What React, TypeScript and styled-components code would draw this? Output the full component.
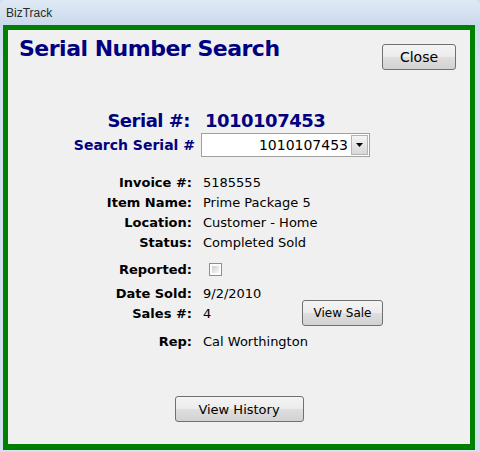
import styled, { createGlobalStyle } from "styled-components";

const GlobalStyle = createGlobalStyle`
  html, body {
    margin: 0;
    padding: 0;
    background: #d3e0ef;
  }
  body {
    font-family: "DejaVu Sans", Verdana, sans-serif;
  }
`;

const Window = styled.div`
  width: 480px;
  height: 452px;
  box-sizing: border-box;
  display: flex;
  flex-direction: column;
  padding: 0 5px 2px 3px;
  border-radius: 6px 6px 0 0;
  background: linear-gradient(to bottom, #e0eaf6 0px, #cad9ec 25px, #d3e0ef 60px, #d3e0ef 100%);
`;

const TitleBar = styled.div`
  height: 25px;
  display: flex;
  align-items: center;
  padding-left: 3px;
  font-family: "Liberation Sans", Arial, sans-serif;
  font-size: 12px;
  color: #2a2a2a;
`;

const Panel = styled.div`
  flex: 1;
  display: flex;
  flex-direction: column;
  background: #f0f0f0;
  border: 5px solid #008000;
  border-bottom-width: 6px;
`;

const Header = styled.div`
  display: flex;
  justify-content: space-between;
  align-items: flex-start;
  padding: 6px 14px 0 11px;
`;

const Heading = styled.h1`
  margin: 0;
  font-family: "DejaVu Sans", Verdana, sans-serif;
  font-size: 22px;
  line-height: 26px;
  font-weight: bold;
  letter-spacing: -0.5px;
  color: #000080;
`;

const PushButton = styled.button<{ $w: number; $size: number; $mt?: number }>`
  width: ${(p) => p.$w}px;
  height: 26px;
  margin-top: ${(p) => p.$mt ?? 0}px;
  padding: 0;
  box-sizing: border-box;
  border: 1px solid #707070;
  border-radius: 3px;
  background: linear-gradient(to bottom, #f4f4f4 0%, #ececec 48%, #dedede 52%, #d2d2d2 100%);
  font-family: "DejaVu Sans", Verdana, sans-serif;
  font-size: ${(p) => p.$size}px;
  color: #000;
`;

const SerialBlock = styled.div`
  display: flex;
  flex-direction: column;
  gap: 1px;
  margin-top: 38px;
`;

const Row = styled.div<{ $gap: number; $h: number; $mt?: number }>`
  display: flex;
  align-items: center;
  gap: ${(p) => p.$gap}px;
  height: ${(p) => p.$h}px;
  margin-top: ${(p) => p.$mt ?? 0}px;
`;

const SerialLabel = styled.div<{ $w: number; $size: number; $ls?: number }>`
  width: ${(p) => p.$w}px;
  text-align: right;
  white-space: nowrap;
  font-size: ${(p) => p.$size}px;
  letter-spacing: ${(p) => p.$ls ?? 0}px;
  font-weight: bold;
  color: #000080;
`;

const SerialValue = styled.div`
  font-size: 18px;
  letter-spacing: -0.5px;
  font-weight: bold;
  color: #000080;
`;

const Combo = styled.div`
  width: 169px;
  height: 24px;
  box-sizing: border-box;
  display: flex;
  align-items: stretch;
  justify-content: flex-end;
  padding: 1px;
  border: 1px solid #a0a0a0;
  background: #fff;
`;

const ComboText = styled.span`
  display: flex;
  align-items: center;
  padding-right: 3px;
  font-size: 14px;
  color: #000;
`;

const DropButton = styled.span`
  width: 17px;
  box-sizing: border-box;
  display: flex;
  align-items: center;
  justify-content: center;
  border: 1px solid #b4b4b4;
  background: linear-gradient(to bottom, #f5f5f5, #e6e6e6 50%, #d8d8d8);
`;

const Details = styled.div`
  display: flex;
  flex-direction: column;
  margin-top: 15px;
`;

const Label = styled.div`
  width: 184px;
  text-align: right;
  font-size: 13px;
  font-weight: bold;
  color: #000;
`;

const Value = styled.div<{ $w?: number }>`
  ${(p) => (p.$w ? `width: ${p.$w}px;` : "")}
  font-size: 13px;
  color: #000;
  white-space: nowrap;
`;

const Check = styled.span`
  width: 13px;
  height: 13px;
  margin-left: 6px;
  box-sizing: border-box;
  padding: 2px;
  border: 1px solid #8f8f8f;
  background: linear-gradient(135deg, #cdd0d5, #f7f7f7) content-box, #fdfdfd;
`;

const Footer = styled.div`
  display: flex;
  justify-content: center;
  margin-top: 45px;
`;

const details: { label: string; value: string }[] = [
  { label: "Invoice #:", value: "5185555" },
  { label: "Item Name:", value: "Prime Package 5" },
  { label: "Location:", value: "Customer - Home" },
  { label: "Status:", value: "Completed Sold" },
];

export default function App() {
  return (
    <>
      <GlobalStyle />
      <Window>
        <TitleBar>BizTrack</TitleBar>
        <Panel>
          <Header>
            <Heading>Serial Number Search</Heading>
            <PushButton $w={74} $size={14} $mt={8}>Close</PushButton>
          </Header>

          <SerialBlock>
            <Row $gap={15} $h={24}>
              <SerialLabel $w={182} $size={18} $ls={-0.5}>Serial #:</SerialLabel>
              <SerialValue>1010107453</SerialValue>
            </Row>
            <Row $gap={6} $h={24}>
              <SerialLabel $w={187} $size={14}>Search Serial #</SerialLabel>
              <Combo>
                <ComboText>1010107453</ComboText>
                <DropButton>
                  <svg width="7" height="4" viewBox="0 0 7 4">
                    <polygon points="0,0 7,0 3.5,4" fill="#000" />
                  </svg>
                </DropButton>
              </Combo>
            </Row>
          </SerialBlock>

          <Details>
            {details.map((d) => (
              <Row key={d.label} $gap={11} $h={20}>
                <Label>{d.label}</Label>
                <Value>{d.value}</Value>
              </Row>
            ))}
            <Row $gap={11} $h={20} $mt={7}>
              <Label>Reported:</Label>
              <Check />
            </Row>
            <Row $gap={11} $h={20} $mt={4}>
              <Label>Date Sold:</Label>
              <Value>9/2/2010</Value>
            </Row>
            <Row $gap={11} $h={20}>
              <Label>Sales #:</Label>
              <Value $w={88}>4</Value>
              <PushButton $w={81} $size={12}>View Sale</PushButton>
            </Row>
            <Row $gap={11} $h={20} $mt={8}>
              <Label>Rep:</Label>
              <Value>Cal Worthington</Value>
            </Row>
          </Details>

          <Footer>
            <PushButton $w={129} $size={13}>View History</PushButton>
          </Footer>
        </Panel>
      </Window>
    </>
  );
}
